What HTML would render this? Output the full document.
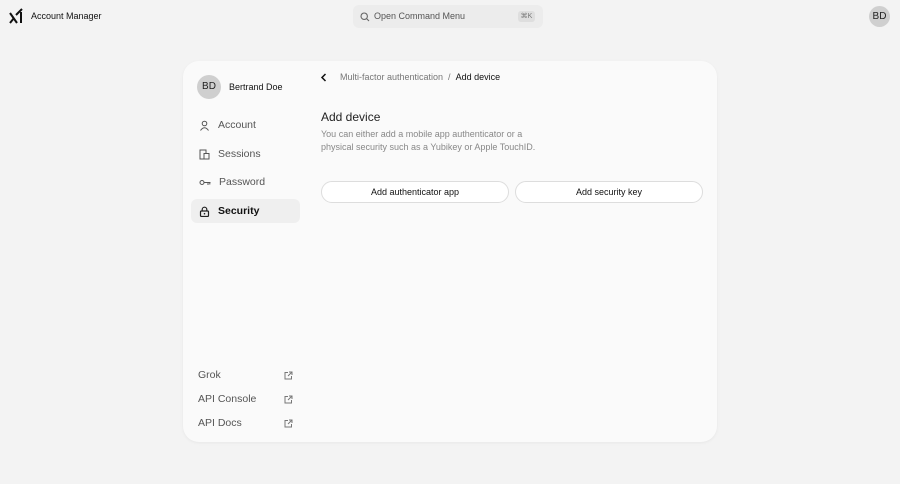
<!DOCTYPE html>
<html><head><meta charset="utf-8"><style>
*{box-sizing:border-box;margin:0;padding:0}
body{width:900px;height:484px;background:#f3f3f3;font-family:"Liberation Sans",sans-serif;color:#111;position:relative;overflow:hidden}
.abs{position:absolute}
.card{left:183px;top:61px;width:534px;height:381px;background:#fafafa;border-radius:16px;box-shadow:0 1px 3px rgba(0,0,0,.05)}
.nav{position:absolute;left:8px;width:109px;height:24px;display:flex;align-items:center;font-size:10.5px;color:#555}
.nav svg{margin-left:8px;margin-right:8px}
.link{position:absolute;left:15px;width:95px;font-size:10.5px;color:#555;display:flex;justify-content:space-between;align-items:center}
.btn{position:absolute;top:120px;height:22px;border:1px solid #ddd;border-radius:11px;background:#fff;font-size:9px;display:flex;align-items:center;justify-content:center;color:#111}
</style></head><body>
<svg class="abs" style="left:9px;top:8px" width="15" height="16" viewBox="0 0 15 16"><path d="M1 5 L8 15 M1 15 L5 10 M7 7 L13 1" stroke="#111" stroke-width="2" fill="none"/><path d="M12 4 V15" stroke="#111" stroke-width="2"/></svg>
<div class="abs" style="left:31px;top:11px;font-size:9px;color:#111">Account Manager</div>
<div class="abs" style="left:353px;top:5px;width:190px;height:23px;background:#ececec;border-radius:6px"></div>
<svg class="abs" style="left:360px;top:12px" width="10" height="10" viewBox="0 0 10 10"><circle cx="4.2" cy="4.2" r="3.2" stroke="#666" fill="none" stroke-width="1.1"/><path d="M6.6 6.6 L9 9" stroke="#666" stroke-width="1.1"/></svg>
<div class="abs" style="left:374px;top:11px;font-size:9px;color:#555">Open Command Menu</div>
<div class="abs" style="left:518px;top:11px;width:17px;height:11px;background:#dedede;border-radius:3px;font-size:7px;color:#777;text-align:center;line-height:11px">⌘K</div>
<div class="abs" style="left:869px;top:6px;width:21px;height:21px;border-radius:50%;background:#cfcfcf;font-size:10px;text-align:center;line-height:21px;color:#222">BD</div>
<div class="abs card">
<div class="abs" style="left:14px;top:14px;width:24px;height:24px;border-radius:50%;background:#cfcfcf;font-size:10px;text-align:center;line-height:24px;color:#222">BD</div>
<div class="abs" style="left:46px;top:21px;font-size:9px;color:#111">Bertrand Doe</div>
<div class="nav" style="top:52px"><svg width="11" height="11" viewBox="0 0 11 11"><circle cx="5.5" cy="3.5" r="2.3" stroke="#555" fill="none"/><path d="M1.5 10.5 Q5.5 5 9.5 10.5" stroke="#555" fill="none"/></svg>Account</div>
<div class="nav" style="top:81px"><svg width="11" height="11" viewBox="0 0 11 11"><rect x="1" y="1" width="6" height="9" stroke="#555" fill="none"/><rect x="5" y="4.5" width="5" height="5.5" stroke="#555" fill="#fafafa"/></svg>Sessions</div>
<div class="nav" style="top:109px"><svg width="12" height="11" viewBox="0 0 12 11"><circle cx="3" cy="5.5" r="2" stroke="#555" fill="none"/><path d="M5 5.5 H11.5 M9 5.5 V8 M10.8 5.5 V7.5" stroke="#555"/></svg>Password</div>
<div class="nav" style="top:138px;background:#efefef;border-radius:6px;color:#111;font-weight:bold"><svg width="11" height="11" viewBox="0 0 11 11"><rect x="1.5" y="5" width="8" height="5.5" rx="1" stroke="#222" fill="none" stroke-width="1.2"/><path d="M3.2 5 V3.5 A2.3 2.3 0 0 1 7.8 3.5 V5" stroke="#222" fill="none" stroke-width="1.2"/><circle cx="5.5" cy="7.7" r=".8" fill="#222"/></svg>Security</div>
<div class="link" style="top:308px">Grok<svg width="9" height="9" viewBox="0 0 9 9"><path d="M4 1.5 H1 V8 H7.5 V5 M5 1 H8 V4 M8 1 L4 5" stroke="#777" fill="none"/></svg></div>
<div class="link" style="top:332px">API Console<svg width="9" height="9" viewBox="0 0 9 9"><path d="M4 1.5 H1 V8 H7.5 V5 M5 1 H8 V4 M8 1 L4 5" stroke="#777" fill="none"/></svg></div>
<div class="link" style="top:356px">API Docs<svg width="9" height="9" viewBox="0 0 9 9"><path d="M4 1.5 H1 V8 H7.5 V5 M5 1 H8 V4 M8 1 L4 5" stroke="#777" fill="none"/></svg></div>
<svg class="abs" style="left:137px;top:12px" width="8" height="9" viewBox="0 0 8 9"><path d="M5.5 1 L2 4.5 L5.5 8" stroke="#111" stroke-width="1.5" fill="none"/></svg>
<div class="abs" style="left:157px;top:11px;font-size:9px;color:#777">Multi-factor authentication&nbsp; / &nbsp;<span style="color:#111">Add device</span></div>
<div class="abs" style="left:138px;top:49px;font-size:12px;color:#222">Add device</div>
<div class="abs" style="left:138px;top:67px;font-size:9px;color:#888;line-height:12.5px;width:230px">You can either add a mobile app authenticator or a physical security such as a Yubikey or Apple TouchID.</div>
<div class="btn" style="left:138px;width:188px">Add authenticator app</div>
<div class="btn" style="left:332px;width:188px">Add security key</div>
</div>
</body></html>
